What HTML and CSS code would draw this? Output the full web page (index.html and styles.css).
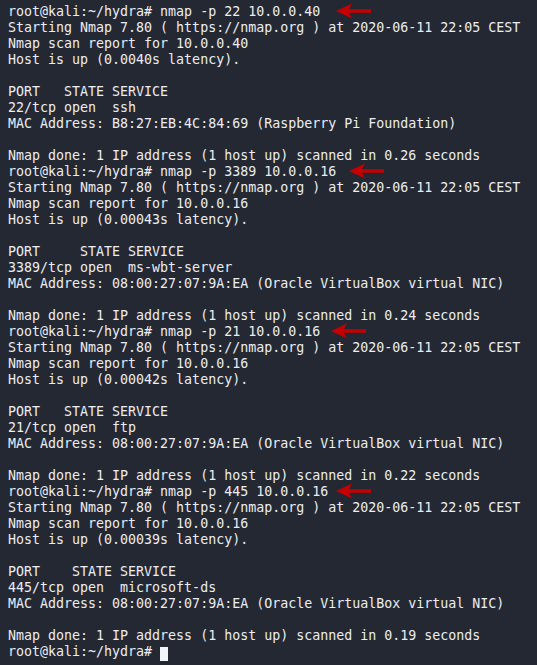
FILE: index.html
```html
<!DOCTYPE html>
<html>
<head>
<meta charset="utf-8">
<link rel="stylesheet" href="styles.css">
</head>
<body>
<div class="term">
<pre class="out">root@kali:~/hydra# nmap -p 22 10.0.0.40
Starting Nmap 7.80 ( https://nmap.org ) at 2020-06-11 22:05 CEST
Nmap scan report for 10.0.0.40
Host is up (0.0040s latency).

PORT   STATE SERVICE
22/tcp open  ssh
MAC Address: B8:27:EB:4C:84:69 (Raspberry Pi Foundation)

Nmap done: 1 IP address (1 host up) scanned in 0.26 seconds
root@kali:~/hydra# nmap -p 3389 10.0.0.16
Starting Nmap 7.80 ( https://nmap.org ) at 2020-06-11 22:05 CEST
Nmap scan report for 10.0.0.16
Host is up (0.00043s latency).

PORT     STATE SERVICE
3389/tcp open  ms-wbt-server
MAC Address: 08:00:27:07:9A:EA (Oracle VirtualBox virtual NIC)

Nmap done: 1 IP address (1 host up) scanned in 0.24 seconds
root@kali:~/hydra# nmap -p 21 10.0.0.16
Starting Nmap 7.80 ( https://nmap.org ) at 2020-06-11 22:05 CEST
Nmap scan report for 10.0.0.16
Host is up (0.00042s latency).

PORT   STATE SERVICE
21/tcp open  ftp
MAC Address: 08:00:27:07:9A:EA (Oracle VirtualBox virtual NIC)

Nmap done: 1 IP address (1 host up) scanned in 0.22 seconds
root@kali:~/hydra# nmap -p 445 10.0.0.16
Starting Nmap 7.80 ( https://nmap.org ) at 2020-06-11 22:05 CEST
Nmap scan report for 10.0.0.16
Host is up (0.00039s latency).

PORT    STATE SERVICE
445/tcp open  microsoft-ds
MAC Address: 08:00:27:07:9A:EA (Oracle VirtualBox virtual NIC)

Nmap done: 1 IP address (1 host up) scanned in 0.19 seconds
root@kali:~/hydra# <span class="cursor"> </span></pre>
<svg class="arrow a1" viewBox="0 0 36 16" width="36" height="16"><path d="M0 8 L16 0.5 L13 6.3 L35 6.3 L35 9.7 L13 9.7 L16 15.5 Z"/></svg>
<svg class="arrow a2" viewBox="0 0 36 16" width="36" height="16"><path d="M0 8 L16 0.5 L13 6.3 L35 6.3 L35 9.7 L13 9.7 L16 15.5 Z"/></svg>
<svg class="arrow a3" viewBox="0 0 36 16" width="36" height="16"><path d="M0 8 L16 0.5 L13 6.3 L35 6.3 L35 9.7 L13 9.7 L16 15.5 Z"/></svg>
<svg class="arrow a4" viewBox="0 0 36 16" width="36" height="16"><path d="M0 8 L16 0.5 L13 6.3 L35 6.3 L35 9.7 L13 9.7 L16 15.5 Z"/></svg>
</div>
</body>
</html>
```

FILE: styles.css
```css
html, body {
  margin: 0;
  padding: 0;
  background: #232833;
}
.term {
  position: relative;
  width: 537px;
  height: 665px;
  box-sizing: border-box;
  padding: 4px 8px 0;
  background: #232833;
  overflow: hidden;
}
.out {
  margin: 0;
  font-family: "DejaVu Sans Mono", "Liberation Mono", monospace;
  font-size: 13.3px;
  line-height: 16px;
  color: #eceef2;
  white-space: pre;
}
.cursor {
  display: inline-block;
  width: 8px;
  height: 14px;
  background: #f2f5fc;
  vertical-align: -3px;
}
.arrow {
  position: absolute;
  fill: #c40000;
}
.a1 { left: 336px; top: 3px; }
.a2 { left: 349px; top: 163px; }
.a3 { left: 331px; top: 323px; }
.a4 { left: 336px; top: 483px; }
```
